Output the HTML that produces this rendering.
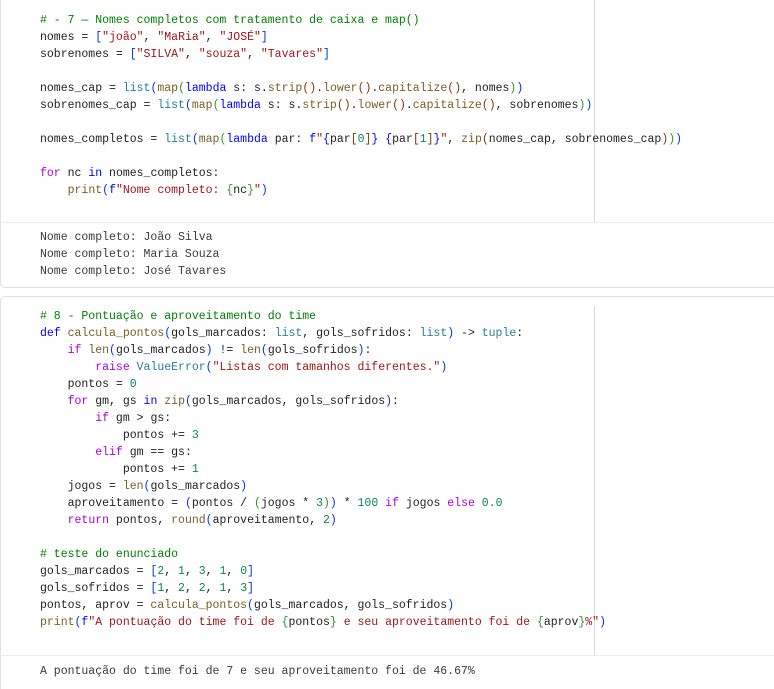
<!DOCTYPE html>
<html><head><meta charset="utf-8"><style>
html,body{margin:0;padding:0;background:#fff;width:774px;height:689px;overflow:hidden;position:relative}
.cell{position:absolute;left:0;width:790px;border:1px solid #e0e0e0;border-radius:5px;box-sizing:border-box}
.sep{position:absolute;left:0;width:774px;height:1px;background:#ececec}
.rule{position:absolute;left:594px;width:1px;background:#d9d9d9}
pre{position:absolute;left:40px;margin:0;font-family:"Liberation Mono",monospace;font-size:11.5px;line-height:17px;color:#222;white-space:pre}
.o{color:#3b3b3b}
.c{color:#008000}.k{color:#0000ff}.p{color:#af00db}.f{color:#795e26}.s{color:#a31515}.n{color:#098658}.t{color:#267f99}
.b1{color:#0431fa}.b2{color:#319331}.b3{color:#7b3814}
</style></head><body>
<div class="cell" style="top:-10px;height:298px"></div>
<div class="sep" style="top:222px"></div>
<div class="rule" style="top:0;height:222px"></div>
<div class="cell" style="top:296px;height:420px"></div>
<div class="sep" style="top:655px"></div>
<div class="rule" style="top:306px;height:349px"></div>

<pre style="top:12px"><span class="c"># - 7 — Nomes completos com tratamento de caixa e map()</span>
nomes = <span class="b1">[</span><span class="s">"joão"</span>, <span class="s">"MaRia"</span>, <span class="s">"JOSÉ"</span><span class="b1">]</span>
sobrenomes = <span class="b1">[</span><span class="s">"SILVA"</span>, <span class="s">"souza"</span>, <span class="s">"Tavares"</span><span class="b1">]</span>

nomes_cap = <span class="t">list</span><span class="b1">(</span><span class="f">map</span><span class="b2">(</span><span class="k">lambda</span> s: s.<span class="f">strip</span><span class="b3">()</span>.<span class="f">lower</span><span class="b3">()</span>.<span class="f">capitalize</span><span class="b3">()</span>, nomes<span class="b2">)</span><span class="b1">)</span>
sobrenomes_cap = <span class="t">list</span><span class="b1">(</span><span class="f">map</span><span class="b2">(</span><span class="k">lambda</span> s: s.<span class="f">strip</span><span class="b3">()</span>.<span class="f">lower</span><span class="b3">()</span>.<span class="f">capitalize</span><span class="b3">()</span>, sobrenomes<span class="b2">)</span><span class="b1">)</span>

nomes_completos = <span class="t">list</span><span class="b1">(</span><span class="f">map</span><span class="b2">(</span><span class="k">lambda</span> par: <span class="k">f</span><span class="s">"</span><span class="k">{</span>par<span class="b3">[</span><span class="n">0</span><span class="b3">]</span><span class="k">}</span><span class="s"> </span><span class="k">{</span>par<span class="b3">[</span><span class="n">1</span><span class="b3">]</span><span class="k">}</span><span class="s">"</span>, <span class="f">zip</span><span class="b3">(</span>nomes_cap, sobrenomes_cap<span class="b3">)</span><span class="b2">)</span><span class="b1">)</span>

<span class="p">for</span> nc <span class="k">in</span> nomes_completos:
    <span class="f">print</span><span class="b1">(</span><span class="k">f</span><span class="s">"Nome completo: </span><span class="b2">{</span>nc<span class="b2">}</span><span class="s">"</span><span class="b1">)</span></pre>

<pre class="o" style="top:229px">Nome completo: João Silva
Nome completo: Maria Souza
Nome completo: José Tavares</pre>

<pre style="top:308px"><span class="c"># 8 - Pontuação e aproveitamento do time</span>
<span class="k">def</span> <span class="f">calcula_pontos</span><span class="b1">(</span>gols_marcados: <span class="t">list</span>, gols_sofridos: <span class="t">list</span><span class="b1">)</span> -&gt; <span class="t">tuple</span>:
    <span class="p">if</span> <span class="f">len</span><span class="b1">(</span>gols_marcados<span class="b1">)</span> != <span class="f">len</span><span class="b1">(</span>gols_sofridos<span class="b1">)</span>:
        <span class="p">raise</span> <span class="t">ValueError</span><span class="b1">(</span><span class="s">"Listas com tamanhos diferentes."</span><span class="b1">)</span>
    pontos = <span class="n">0</span>
    <span class="p">for</span> gm, gs <span class="k">in</span> <span class="f">zip</span><span class="b1">(</span>gols_marcados, gols_sofridos<span class="b1">)</span>:
        <span class="p">if</span> gm &gt; gs:
            pontos += <span class="n">3</span>
        <span class="p">elif</span> gm == gs:
            pontos += <span class="n">1</span>
    jogos = <span class="f">len</span><span class="b1">(</span>gols_marcados<span class="b1">)</span>
    aproveitamento = <span class="b1">(</span>pontos / <span class="b2">(</span>jogos * <span class="n">3</span><span class="b2">)</span><span class="b1">)</span> * <span class="n">100</span> <span class="p">if</span> jogos <span class="p">else</span> <span class="n">0.0</span>
    <span class="p">return</span> pontos, <span class="f">round</span><span class="b1">(</span>aproveitamento, <span class="n">2</span><span class="b1">)</span>

<span class="c"># teste do enunciado</span>
gols_marcados = <span class="b1">[</span><span class="n">2</span>, <span class="n">1</span>, <span class="n">3</span>, <span class="n">1</span>, <span class="n">0</span><span class="b1">]</span>
gols_sofridos = <span class="b1">[</span><span class="n">1</span>, <span class="n">2</span>, <span class="n">2</span>, <span class="n">1</span>, <span class="n">3</span><span class="b1">]</span>
pontos, aprov = <span class="f">calcula_pontos</span><span class="b1">(</span>gols_marcados, gols_sofridos<span class="b1">)</span>
<span class="f">print</span><span class="b1">(</span><span class="k">f</span><span class="s">"A pontuação do time foi de </span><span class="b2">{</span>pontos<span class="b2">}</span><span class="s"> e seu aproveitamento foi de </span><span class="b2">{</span>aprov<span class="b2">}</span><span class="s">%"</span><span class="b1">)</span></pre>

<pre class="o" style="top:663px">A pontuação do time foi de 7 e seu aproveitamento foi de 46.67%</pre>
</body></html>
